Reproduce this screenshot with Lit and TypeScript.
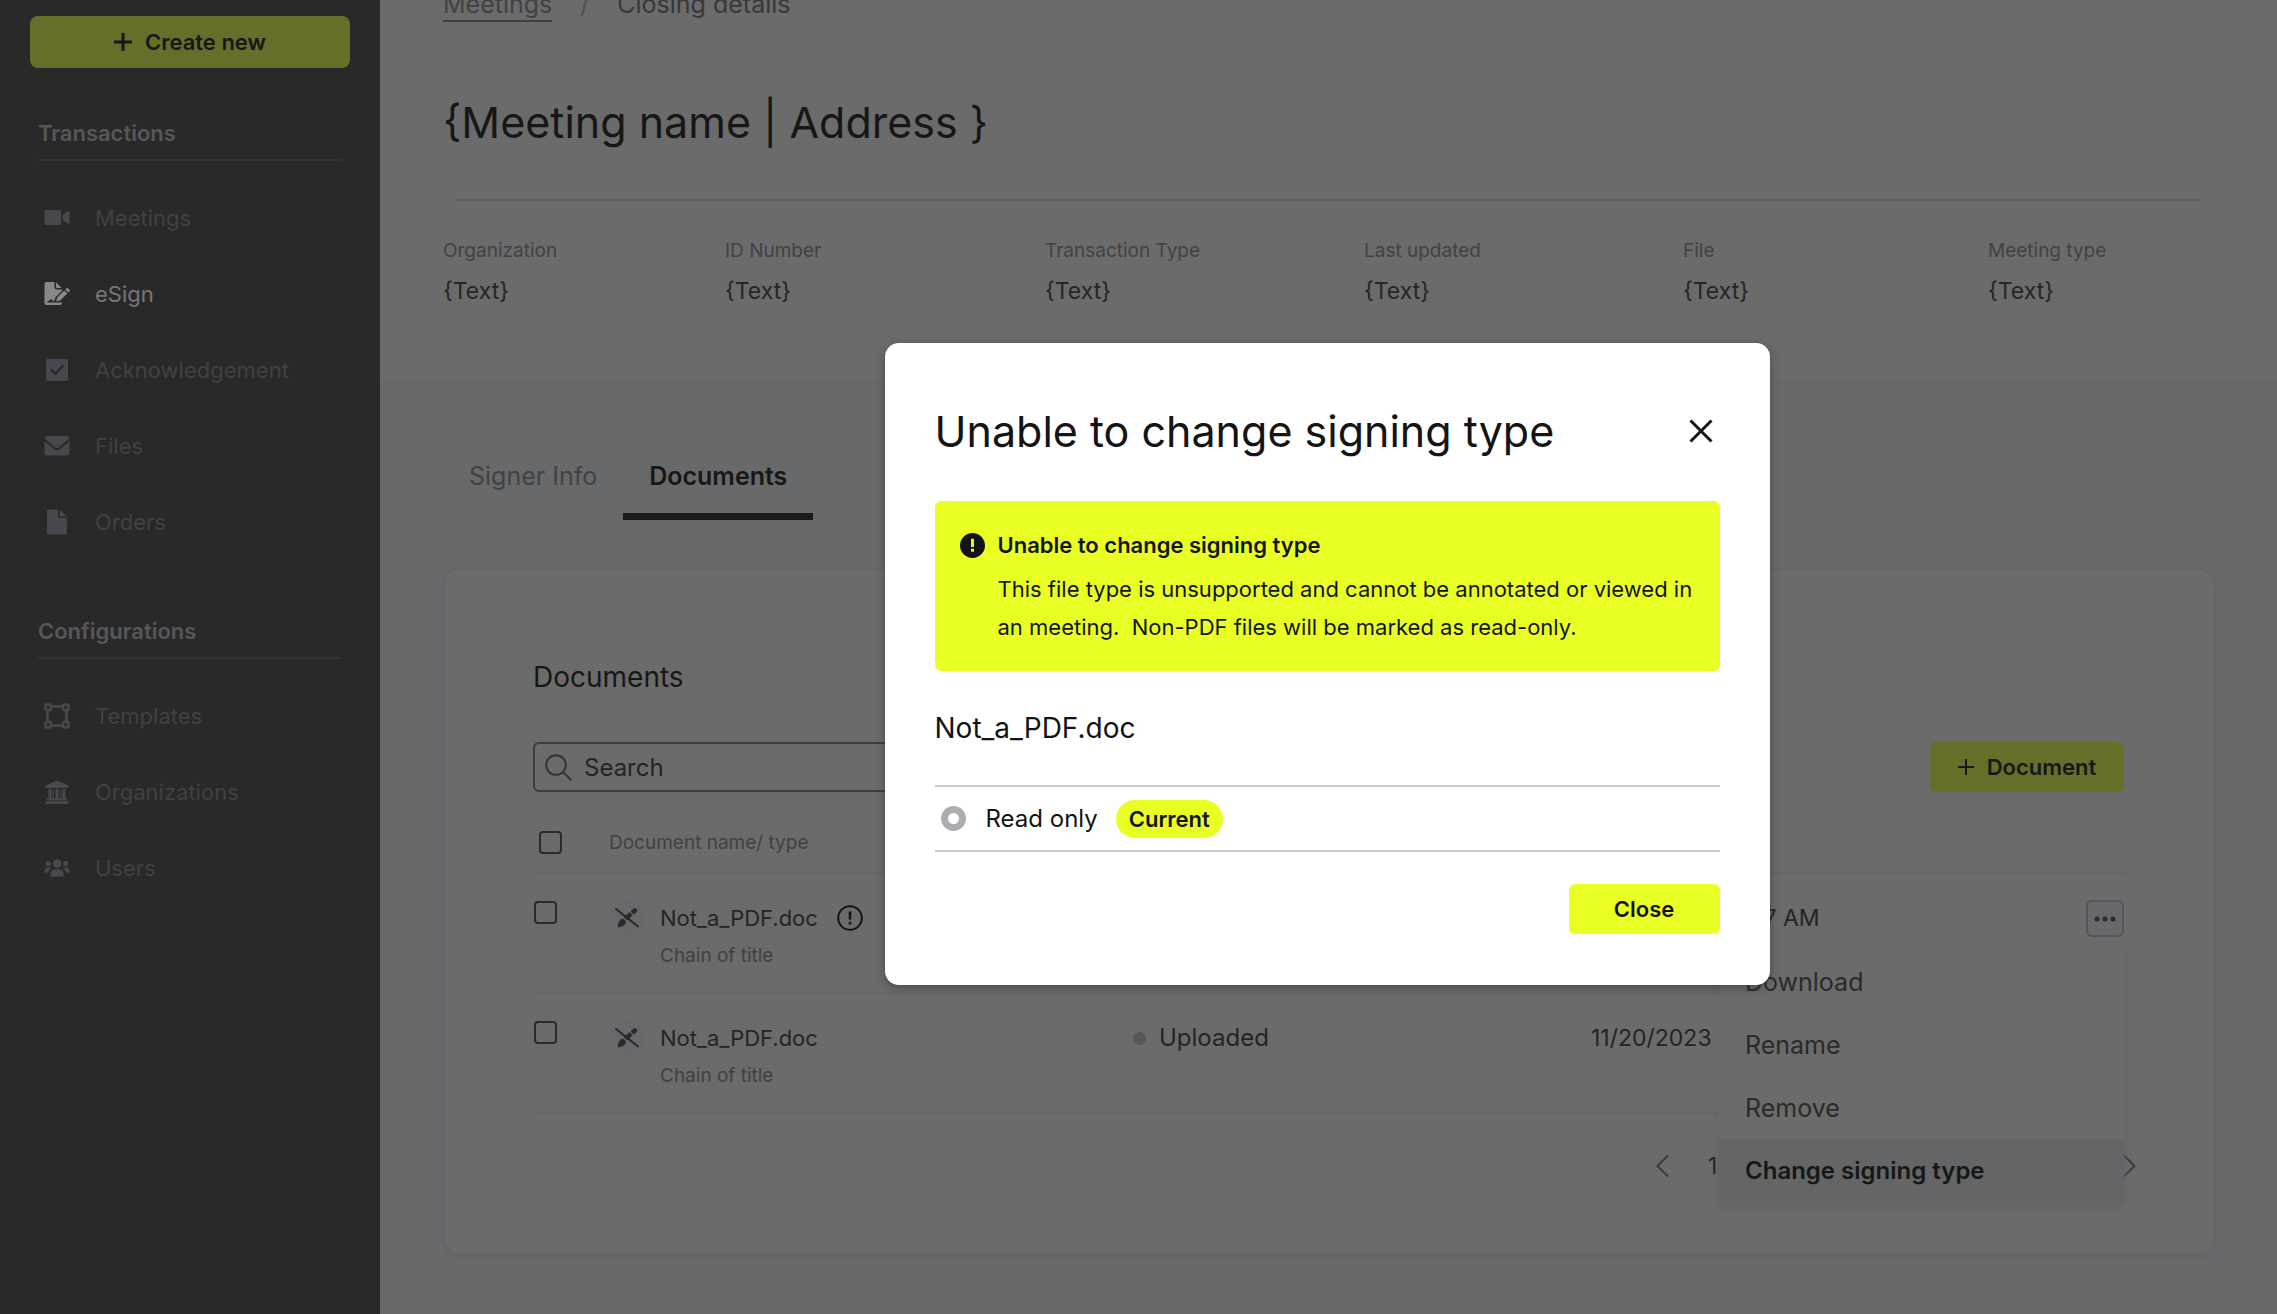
import { LitElement, html, css, svg, nothing, type TemplateResult } from "lit";
import { customElement, property } from "lit/decorators.js";
import { classMap } from "lit/directives/class-map.js";

const icons: Record<string, TemplateResult> = {
  video: svg`<path d="M2.5 5h12.5a2 2 0 0 1 2 2v11a2 2 0 0 1-2 2H2.500a2 2 0 0 1-2-2V7a2 2 0 0 1 2-2Z"/><path d="m18.500 10 5.300-3.700a1 1 0 0 1 1.700.8v10.800a1 1 0 0 1-1.700.8L18.500 15Z"/>`,
  esign: svg`<path fill-rule="evenodd" d="M2.500 1h8v5.500a2 2 0 0 0 2 2h5.500v1.200l-6.500 6.500-1.200 3.600c-1 .4-1.700.1-2.100-.7-.5-1.100-1.800-1.100-2.500-.1l-.6 1H3.500v1.600h14.500v.4a2 2 0 0 1-2 2H2.500a2 2 0 0 1-2-2V3a2 2 0 0 1 2-2Z"/><path d="M12 1.300 17.700 7H13a1 1 0 0 1-1-1Z"/><path d="m20.200 9.600 3.200 3-7.200 6.800-4 1.200 1-4Z"/><path d="m21.200 8.600 1.300-1.200c.5-.5 1.200-.5 1.700 0l1.300 1.300c.5.5.5 1.200 0 1.700l-1.200 1.200Z"/>`,
  check: svg`<path fill-rule="evenodd" d="M4 2h18a2 2 0 0 1 2 2v18a2 2 0 0 1-2 2H4a2 2 0 0 1-2-2V4a2 2 0 0 1 2-2Zm14.400 5.600-7 7.600-3.600-3.600-1.600 1.600 5.300 5.300 8.600-9.300Z"/>`,
  mail: svg`<path d="M3 3h20a2.500 2.500 0 0 1 2.500 2.500L14.500 14.500a2.500 2.500 0 0 1-3 0L.5 5.500A2.500 2.500 0 0 1 3 3Z"/><path d="m.5 8.300 9.800 7.900a4.300 4.300 0 0 0 5.400 0l9.800-7.900V20a2.500 2.500 0 0 1-2.500 2.500H3A2.500 2.500 0 0 1 .5 20Z"/>`,
  file: svg`<path d="M5 .5h9V7a2 2 0 0 0 2 2h7v14.500a2 2 0 0 1-2 2H5a2 2 0 0 1-2-2v-21a2 2 0 0 1 2-2Z"/><path d="M15.800.8 22.700 7.400h-5.900a1 1 0 0 1-1-1Z"/>`,
  template: svg`<g fill="none" stroke="currentColor" stroke-width="2.600"><rect x="1.500" y="1.500" width="5.500" height="5.500" rx="1.500"/><rect x="19" y="1.500" width="5.500" height="5.500" rx="1.500"/><rect x="1.500" y="19" width="5.500" height="5.500" rx="1.500"/><rect x="19" y="19" width="5.500" height="5.500" rx="1.500"/><path d="M7 3.500h12M7 22.500h12M3.500 7v12M22.500 7v12"/></g>`,
  bank: svg`<path d="M13 1.500 24.500 6.500V9H1.500V6.500Z"/><path d="M4.500 10h3v10h-3zM11.500 10h3v10h-3zM18.500 10h3v10h-3zM8.700 11h1.200v9H8.700zM16.100 11h1.200v9h-1.200zM3 19.500h20v2H3zM1.500 22.300h23V25h-23z"/>`,
  users: svg`<circle cx="13" cy="8.500" r="4.300"/><circle cx="4.300" cy="8.500" r="2.600"/><circle cx="21.700" cy="8.500" r="2.600"/><path d="M6.500 21.500V19a5 5 0 0 1 5-4.800h3A5 5 0 0 1 19.500 19v2.500ZM.5 17.500a4.500 4.500 0 0 1 4.300-5.300c1 0 1.800.3 2.400.8-1.700 1.300-2.600 2.700-2.900 4.500ZM25.500 17.500a4.500 4.500 0 0 0-4.300-5.300c-1 0-1.800.3-2.400.8 1.700 1.300 2.600 2.700 2.900 4.500Z"/>`,
};

const icon = (name: string) => html`<svg class="icon" viewBox="0 0 26 26" width="26" height="26" fill="currentColor" aria-hidden="true">${icons[name]}</svg>`;

const plus = (width: number) => html`<svg viewBox="0 0 18 18" width="18" height="18" fill="none" stroke="currentColor" stroke-width=${width} aria-hidden="true"><path d="M9 0v18M0 9h18"/></svg>`;

interface NavItem { icon: string; label: string; active?: boolean; }

const sections: { title: string; items: NavItem[] }[] = [
  {
    title: "Transactions",
    items: [
      { icon: "video", label: "Meetings" },
      { icon: "esign", label: "eSign", active: true },
      { icon: "check", label: "Acknowledgement" },
      { icon: "mail", label: "Files" },
      { icon: "file", label: "Orders" },
    ],
  },
  {
    title: "Configurations",
    items: [
      { icon: "template", label: "Templates" },
      { icon: "bank", label: "Organizations" },
      { icon: "users", label: "Users" },
    ],
  },
];

const facts = ["Organization", "ID Number", "Transaction Type", "Last updated", "File", "Meeting type"];

interface Doc { name: string; type: string; status: string; date: string; warn?: boolean; menu?: boolean; }

const docs: Doc[] = [
  { name: "Not_a_PDF.doc", type: "Chain of title", status: "Uploaded", date: "11/20/2023 10:47 AM", warn: true, menu: true },
  { name: "Not_a_PDF.doc", type: "Chain of title", status: "Uploaded", date: "11/20/2023 10:47 AM" },
];

const base = css`
  *, *::before, *::after { box-sizing: border-box; }
  h1, h2, h3, p, dl, dd, ul { margin: 0; padding: 0; }
  ul { list-style: none; }
  a { color: inherit; text-decoration: none; }
  svg { display: block; flex: none; }
  button {
    font: inherit;
    color: inherit;
    background: none;
    border: 0;
    padding: 0;
    cursor: pointer;
  }
`;

@customElement("side-nav")
class SideNav extends LitElement {
  static styles = [base, css`
    :host { display: block; background: #292929; padding: 16px 30px; color: #414144; font-size: 22px; }
    .create {
      display: flex;
      align-items: center;
      justify-content: center;
      gap: 13px;
      width: 100%;
      height: 52px;
      border-radius: 8px;
      background: #676e2a;
      color: #17171a;
      font-weight: 600;
    }
    .section { margin: 52px 8px 0 8px; }
    .section + .section { margin-top: 58px; }
    .title {
      font-size: 22px;
      font-weight: 600;
      line-height: 26px;
      color: #57575b;
      padding-bottom: 13px;
      border-bottom: 2px solid #34342e;
      margin-bottom: 19px;
    }
    .item { display: flex; align-items: center; gap: 25px; height: 76px; padding-left: 6px; }
    .icon { color: #48494e; }
    .active { color: #78787a; }
    .active .icon { color: #88888a; }
  `];

  render() {
    return html`
      <button class="create">${plus(3)}Create new</button>
      ${sections.map((s) => html`
        <nav class="section" aria-label=${s.title}>
          <h3 class="title">${s.title}</h3>
          <ul>
            ${s.items.map((i) => html`
              <li><a href="#" class=${classMap({ item: true, active: !!i.active })}>${icon(i.icon)}${i.label}</a></li>`)}
          </ul>
        </nav>`)}
    `;
  }
}

@customElement("row-menu")
class RowMenu extends LitElement {
  static styles = [base, css`
    :host {
      display: block;
      padding-top: 2px;
      background: #6b6b6b;
      border-radius: 8px;
      overflow: hidden;
      box-shadow: 0 2px 6px #606266;
      font-size: 25px;
      color: #2a2a29;
    }
    .entry { display: block; width: 100%; height: 63px; padding: 0 26px; text-align: left; }
    .selected { height: 67px; padding-bottom: 4px; background: #636567; color: #171717; font-size: 24px; font-weight: 600; }
  `];

  render() {
    return html`
      <button class="entry">Download</button>
      <button class="entry">Rename</button>
      <button class="entry">Remove</button>
      <button class="entry selected">Change signing type</button>
    `;
  }
}

@customElement("document-table")
class DocumentTable extends LitElement {
  static styles = [base, css`
    :host { display: block; margin-top: 20px; }
    .table { width: 100%; table-layout: fixed; border-collapse: separate; border-spacing: 0; }
    .col-check { width: 76px; }
    .col-name { width: 524px; }
    .col-status { width: 458px; }
    .col-actions { width: 60px; }
    th, td { padding: 0; text-align: left; vertical-align: top; border-bottom: 2px solid #646669; }
    th { height: 62px; padding-top: 18px; font-size: 19px; line-height: 26px; font-weight: 400; color: #414247; }
    td { height: 120px; padding-top: 29px; font-size: 23px; line-height: 30px; color: #242424; }
    .box {
      display: block;
      appearance: none;
      width: 23px;
      height: 23px;
      margin: 1px 0 0 6px;
      border: 2px solid #2b2b2b;
      border-radius: 4px;
    }
    .check .box { margin: -2px 0 0 1px; }
    .doc { display: flex; align-items: center; font-size: 22px; height: 30px; }
    .badge {
      display: grid;
      place-items: center;
      width: 36px;
      height: 36px;
      border-radius: 50%;
      background: #67696c;
      color: #2b2b29;
      margin-right: 15px;
    }
    .warn { margin-left: 19px; }
    .type { margin: 10px 0 0 51px; font-size: 19px; line-height: 26px; color: #3f4044; }
    .status { display: flex; align-items: center; gap: 13px; font-size: 24px; }
    .dot { width: 13px; height: 13px; border-radius: 50%; background: #54565b; }
    .actions { position: relative; display: flex; justify-content: flex-end; margin-top: -3px; }
    .more {
      display: grid;
      place-items: center;
      width: 38px;
      height: 37px;
      border: 2px solid #55575c;
      border-radius: 6px;
      background: #67696c;
    }
    .menu { position: absolute; z-index: 1; top: 48px; right: 0; width: 405px; }
  `];

  private row(d: Doc, n: number) {
    return html`
      <tr>
        <td class="check"><input class="box" type="checkbox" aria-label="Select document ${n + 1}"></td>
        <td>
          <div class="doc">
            <span class="badge">
              <svg viewBox="0 0 24 22" width="24" height="22" fill="currentColor" aria-hidden="true">
                <path d="m15.600 4.200 3-2.700a1.700 1.700 0 0 1 2.400.1l.8.900a1.700 1.700 0 0 1-.1 2.400l-3 2.600Z"/>
                <path d="m14.700 5 3 3.300-5.300 5.200-3.700-3.200Z"/>
                <path d="m7.600 11.500 3.700 3.300c-.7 3-3.300 5-7.800 5.500-.6 0-.9-.4-.8-1 .6-4.300 2.200-6.800 4.900-7.800Z"/>
                <path d="M.5 1.500 23.500 20" stroke="currentColor" stroke-width="2"/>
              </svg>
            </span>
            ${d.name}
            ${d.warn ? html`
              <svg class="warn" viewBox="0 0 26 26" width="26" height="26" fill="none" stroke="#141414" stroke-width="2" role="img" aria-label="Warning">
                <circle cx="13" cy="13" r="11.800"/><path d="M13 6.500v8M13 16.800v2.800" stroke-width="2.600"/>
              </svg>` : nothing}
          </div>
          <p class="type">${d.type}</p>
        </td>
        <td><div class="status"><span class="dot"></span>${d.status}</div></td>
        <td>${d.date}</td>
        <td>
          <div class="actions">
            <button class="more" aria-label="More actions">
              <svg viewBox="0 0 22 6" width="22" height="6" fill="#2b2b2d"><circle cx="3" cy="3" r="2.500"/><circle cx="11" cy="3" r="2.500"/><circle cx="19" cy="3" r="2.500"/></svg>
            </button>
            ${d.menu ? html`<row-menu class="menu"></row-menu>` : nothing}
          </div>
        </td>
      </tr>`;
  }

  render() {
    return html`
      <table class="table">
        <colgroup><col class="col-check"><col class="col-name"><col class="col-status"><col><col class="col-actions"></colgroup>
        <thead>
          <tr>
            <th><input class="box" type="checkbox" aria-label="Select all documents"></th>
            <th>Document name/ type</th>
            <th></th><th></th><th></th>
          </tr>
        </thead>
        <tbody>${docs.map((d, n) => this.row(d, n))}</tbody>
      </table>`;
  }
}

@customElement("signing-dialog")
class SigningDialog extends LitElement {
  @property() file = "Not_a_PDF.doc";

  static styles = [base, css`
    :host {
      display: block;
      width: 885px;
      max-width: 100%;
      padding: 60px 50px 51px;
      background: #fff;
      border-radius: 14px;
      box-shadow: 0 3px 8px rgba(40, 42, 46, 0.5);
      color: #141414;
    }
    .head { display: flex; align-items: center; justify-content: space-between; padding-right: 7px; }
    .title { font-size: 43px; font-weight: 400; line-height: 56px; }
    .alert {
      display: flex;
      gap: 13px;
      margin-top: 42px;
      padding: 25px 20px 25px 25px;
      border-radius: 6px;
      background: #e9ff24;
      font-size: 22px;
      line-height: 38px;
    }
    .mark { margin-top: 7px; }
    .alert-title { font-size: 22px; font-weight: 600; margin-bottom: 6px; }
    .file { margin-top: 39px; font-size: 28px; font-weight: 400; line-height: 36px; }
    .option {
      display: flex;
      align-items: center;
      height: 67px;
      margin-top: 39px;
      padding-left: 6px;
      border-top: 2px solid #c9cacf;
      border-bottom: 2px solid #c9cacf;
      font-size: 24px;
    }
    .radio {
      appearance: none;
      width: 25px;
      height: 25px;
      margin: 0 20px 0 0;
      border: 7px solid #acadb1;
      border-radius: 50%;
      background: #fff;
    }
    .current {
      margin-left: 18px;
      padding: 0 13px;
      border-radius: 19px;
      background: #e9ff24;
      font-size: 22px;
      font-weight: 600;
      line-height: 38px;
    }
    .foot { display: flex; justify-content: flex-end; margin-top: 32px; }
    .close { width: 151px; height: 50px; border-radius: 6px; background: #e9ff24; font-size: 22px; font-weight: 600; }
  `];

  render() {
    return html`
      <div class="head">
        <h2 class="title">Unable to change signing type</h2>
        <button aria-label="Dismiss">
          <svg viewBox="0 0 24 24" width="24" height="24" fill="none" stroke="currentColor" stroke-width="3"><path d="m1.500 1.500 21 21M22.500 1.500l-21 21"/></svg>
        </button>
      </div>
      <div class="alert" role="alert">
        <svg class="mark" viewBox="0 0 26 26" width="25" height="25" aria-hidden="true">
          <circle cx="13" cy="13" r="13" fill="#141414"/><path d="M13 6v8.500M13 16.500v3" stroke="#e9ff24" stroke-width="3"/>
        </svg>
        <div>
          <h3 class="alert-title">Unable to change signing type</h3>
          <p>This file type is unsupported and cannot be annotated or viewed in an meeting.&nbsp; Non-PDF files will be marked as read-only.</p>
        </div>
      </div>
      <h3 class="file">${this.file}</h3>
      <div class="option">
        <input class="radio" type="radio" id="readonly" name="signing">
        <label for="readonly">Read only</label>
        <span class="current">Current</span>
      </div>
      <div class="foot"><button class="close">Close</button></div>
    `;
  }
}

@customElement("app-root")
class AppRoot extends LitElement {
  static styles = [base, css`
    :host {
      position: relative;
      display: grid;
      grid-template-columns: 380px minmax(0, 1fr);
      height: 100vh;
      overflow: hidden;
      background: #68696b;
      font-family: Inter, "Open Sans", "Liberation Sans", sans-serif;
      font-size: 24px;
      color: #171717;
    }
    .main { min-width: 0; }
    .header { background: #6b6b6b; padding: 0 64px 72px 63px; }
    .crumbs { display: flex; gap: 28px; margin-top: -12px; font-size: 25px; line-height: 32px; color: #38383a; }
    .crumb { border-bottom: 2px solid #3f4045; color: #414247; }
    .slash { color: #4f5054; }
    .name { margin-top: 72px; font-size: 43px; font-weight: 400; line-height: 56px; }
    .rule { height: 2px; margin: 49px 12px 37px 13px; border: 0; background: #5a5c60; }
    .facts { display: grid; grid-template-columns: 282fr 320fr 319fr 319fr 305fr 225fr; }
    .label { font-size: 19px; line-height: 26px; color: #414247; }
    .value { margin-top: 11px; font-size: 23px; line-height: 32px; color: #262625; }
    .body { padding: 73px 62px 60px 63px; }
    .tabs { display: flex; }
    .tab {
      padding: 0 26px 13px;
      border-bottom: 7px solid transparent;
      font-size: 25px;
      line-height: 48px;
      color: #414245;
    }
    .tab.on { border-color: #1b1b1b; color: #171717; font-weight: 600; }
    .card {
      margin-top: 48px;
      padding: 89px 89px 71px 88px;
      border: 2px solid #646669;
      border-radius: 16px;
      background: #6b6b6b;
      box-shadow: 0 2px 4px #646568;
    }
    .heading { font-size: 28px; font-weight: 400; line-height: 36px; }
    .tools { display: flex; justify-content: space-between; margin-top: 47px; }
    .search {
      display: flex;
      align-items: center;
      gap: 12px;
      width: 440px;
      height: 50px;
      padding: 0 10px;
      border: 2px solid #3b3c41;
      border-radius: 6px;
    }
    .query { flex: 1; min-width: 0; padding: 0; border: 0; outline: 0; background: none; font: inherit; font-size: 24px; }
    .query::placeholder { color: #242424; opacity: 1; }
    .add {
      display: flex;
      align-items: center;
      justify-content: center;
      gap: 13px;
      width: 194px;
      height: 50px;
      border-radius: 6px;
      background: #676e2a;
      font-size: 22px;
      font-weight: 600;
    }
    .pager { display: flex; align-items: center; gap: 39px; width: 480px; height: 32px; margin: 36px -12px 0 auto; color: #242424; font-size: 23px; }
    .next { margin-left: auto; }
    .arrow { color: #3b3c41; }
    .layer {
      position: absolute;
      inset: 0 3px 0 380px;
      z-index: 2;
      display: flex;
      justify-content: center;
      align-items: flex-start;
      padding-top: 343px;
    }
  `];

  render() {
    return html`
      <side-nav></side-nav>
      <main class="main">
        <header class="header">
          <nav class="crumbs" aria-label="Breadcrumb">
            <a class="crumb" href="#">Meetings</a><span class="slash">/</span><span>Closing details</span>
          </nav>
          <h1 class="name">{Meeting name | Address }</h1>
          <hr class="rule">
          <dl class="facts">
            ${facts.map((f) => html`<div><dt class="label">${f}</dt><dd class="value">{Text}</dd></div>`)}
          </dl>
        </header>
        <section class="body">
          <div class="tabs" role="tablist">
            <button class="tab" role="tab" aria-selected="false">Signer Info</button>
            <button class="tab on" role="tab" aria-selected="true">Documents</button>
          </div>
          <div class="card">
            <h2 class="heading">Documents</h2>
            <div class="tools">
              <label class="search">
                <svg viewBox="0 0 27 27" width="27" height="27" fill="none" stroke="#333436" stroke-width="2" aria-hidden="true"><circle cx="11" cy="11" r="9.800"/><path d="m18 18 8.300 8.300"/></svg>
                <input class="query" type="search" placeholder="Search" aria-label="Search">
              </label>
              <button class="add">
                <svg viewBox="0 0 16 16" width="16" height="16" fill="none" stroke="currentColor" stroke-width="2" aria-hidden="true"><path d="M8 0v16M0 8h16"/></svg>Document
              </button>
            </div>
            <document-table></document-table>
            <nav class="pager" aria-label="Pages">
              <button class="arrow" aria-label="Previous page">
                <svg viewBox="0 0 13 24" width="13" height="24" fill="none" stroke="currentColor" stroke-width="2"><path d="M12 1.500 1.500 12 12 22.500"/></svg>
              </button>
              <button>1</button>
              <button class="arrow next" aria-label="Next page">
                <svg viewBox="0 0 13 24" width="13" height="24" fill="none" stroke="currentColor" stroke-width="2"><path d="M1 1.500 11.500 12 1 22.500"/></svg>
              </button>
            </nav>
          </div>
        </section>
      </main>
      <div class="layer"><signing-dialog role="dialog" aria-label="Unable to change signing type"></signing-dialog></div>
    `;
  }
}
